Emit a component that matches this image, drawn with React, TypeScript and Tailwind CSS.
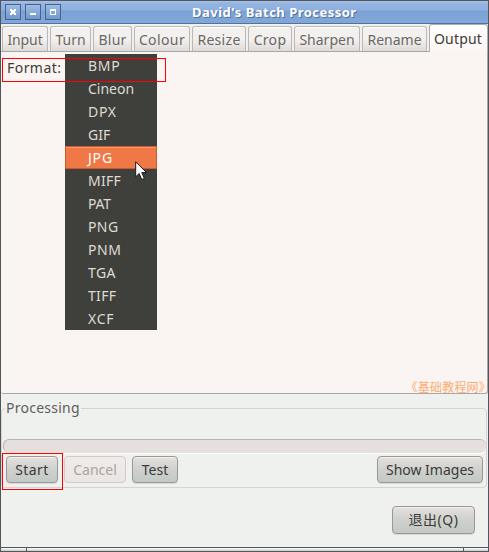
import React from "react";

const tabs = [
  { label: "Input", box: "w-[46px]", text: "tracking-[-0.1px]" },
  { label: "Turn", box: "w-[41px]", text: "tracking-[0px]" },
  { label: "Blur", box: "w-[39px]", text: "tracking-[0.2px]" },
  { label: "Colour", box: "w-[56px]", text: "tracking-[0.4px]" },
  { label: "Resize", box: "w-[54px]", text: "tracking-[0.3px]" },
  { label: "Crop", box: "w-[44px]", text: "tracking-[0.3px]" },
  { label: "Sharpen", box: "w-[66px]", text: "tracking-[0px]" },
  { label: "Rename", box: "w-[65px]", text: "tracking-[0px]" },
];

const formats = [
  { label: "BMP", text: "tracking-[0.7px]" },
  { label: "Cineon", text: "tracking-[0px]" },
  { label: "DPX", text: "tracking-[0.7px]" },
  { label: "GIF", text: "tracking-[0px]" },
  { label: "JPG", text: "tracking-[0.8px]" },
  { label: "MIFF", text: "tracking-[0.3px]" },
  { label: "PAT", text: "tracking-[-0.2px]" },
  { label: "PNG", text: "tracking-[0.4px]" },
  { label: "PNM", text: "tracking-[0.6px]" },
  { label: "TGA", text: "tracking-[0.4px]" },
  { label: "TIFF", text: "tracking-[0.3px]" },
  { label: "XCF", text: "tracking-[0.8px]" },
];

function WindowButton({ children }: { children: React.ReactNode }) {
  return (
    <button className="flex h-4 w-4 items-center justify-center border border-[#46628c] bg-linear-to-b from-[#9dbbe6] to-[#7299cb]">
      <svg width="14" height="14" viewBox="0 0 14 14" shapeRendering="crispEdges">
        {children}
      </svg>
    </button>
  );
}

function Button({ label, className, disabled }: { label: string; className: string; disabled?: boolean }) {
  const look = disabled
    ? "border-[#d3c9c8] bg-linear-to-b from-[#f0ecea] to-[#ebe5e3] text-[#aaa4a2]"
    : "border-[#9b9795] bg-linear-to-b from-[#e4e0dd] via-[#cfd1ce] to-[#c3c9c6] text-[#3c3b37] shadow-[inset_0_1px_0_#f3f0ee,0_1px_0_#d9d9d7]";
  return (
    <button disabled={disabled} className={`flex shrink-0 items-center justify-center rounded-[4px] border whitespace-nowrap ${look} ${className}`}>
      {label}
    </button>
  );
}

export default function App() {
  return (
    <div className="relative flex h-[552px] w-[489px] flex-col overflow-hidden border border-[#54555a] bg-[#eff1ee] font-['Noto_Sans','Noto_Sans_CJK_SC',sans-serif] text-[14px] leading-[18px] text-[#3c3b37]">
      <header className="flex h-[23px] shrink-0 items-center border-b border-[#5272a4] bg-[linear-gradient(#a9c4ea_0,#94b4e1_2px,#8fb0df_9px,#7ba2d5_10px,#82a8d9_100%)] pl-1">
        <div className="flex gap-1">
          <WindowButton>
            <path fill="#fff" d="M4 4h2v1h2V4h2v2H9v2h1v2H8V9H6v1H4V8h1V6H4z" />
          </WindowButton>
          <WindowButton>
            <path fill="#fff" d="M4 8h6v2H4z" />
          </WindowButton>
          <WindowButton>
            <path fill="#fff" fillRule="evenodd" d="M4 4h6v6H4zM5 6v3h4V6z" />
          </WindowButton>
        </div>
        <h1 className="ml-[131px] text-[13px] font-bold tracking-[0.48px] whitespace-nowrap text-white [text-shadow:1px_1px_0_#53719d]">
          David's Batch Processor
        </h1>
      </header>

      <nav className="flex h-[28px] shrink-0 items-end bg-[#eff1ee]">
        <div className="flex h-[26px] flex-1 gap-[2px] border-b border-[#aaa6a4] pl-px">
          {tabs.map((t) => (
            <button
              key={t.label}
              className={`flex h-[25px] shrink-0 items-center justify-center rounded-t-[3px] border border-b-0 border-[#bdb8b6] bg-linear-to-b from-[#f3f1ef] from-50% to-[#dedad7] pt-[2px] text-[#6b6865] shadow-[inset_0_1px_0_#fff] ${t.box} ${t.text}`}
            >
              {t.label}
            </button>
          ))}
        </div>
        <button className="flex h-[28px] w-[59px] shrink-0 items-center justify-center rounded-t-[3px] border border-b-0 border-[#b0acaa] bg-linear-to-b from-white to-[#faf5f2] pr-px tracking-[0.2px]">
          Output
        </button>
      </nav>

      <main className="relative flex h-[342px] shrink-0 rounded-b-[3px] border-r border-b border-[#aaa6a4] bg-[#faf5f2] pl-[6px]">
        <label className="mt-[7px] w-[58px] tracking-[0.45px] whitespace-nowrap">Format:</label>
        <ul className="mt-[2px] h-[276px] w-[92px] bg-[#3f403c] text-[#dfdbd2]">
          {formats.map((f) => (
            <li
              key={f.label}
              className={`flex h-[23px] items-center border pl-[22px] ${f.text} ${
                f.label === "JPG" ? "border-[#c95a2c] bg-[#f07746] text-white shadow-[inset_0_1px_0_#f79a72]" : "border-transparent"
              }`}
            >
              {f.label}
            </li>
          ))}
        </ul>
        <span className="absolute right-[2px] bottom-[-2px] font-['Noto_Sans_CJK_SC',sans-serif] text-[12px] leading-[16px] tracking-[0.2px] whitespace-nowrap text-[#ffab70] [font-feature-settings:'halt']">
          《基础教程网》
        </span>
      </main>

      <fieldset className="relative mt-[14px] flex h-[80px] w-[486px] shrink-0 flex-col rounded-[4px] border border-[#d6d3d1]">
        <span className="absolute -top-[11px] left-[3px] bg-[#eff1ee] pr-px pl-px leading-[20px] tracking-[0.25px] text-[#5f5d5a]">Processing</span>
        <div className="mt-[30px] ml-px h-[14px] w-[483px] rounded-[6px] border-t border-l border-[#b9b3b1] bg-[#e5dfde] shadow-[0_1px_0_#fff]" />
        <div className="mt-[3px] flex pl-1">
          <Button label="Start" className="h-[27px] w-[52px] tracking-[0.4px]" />
          <Button label="Cancel" disabled className="ml-[6px] h-[27px] w-[62px]" />
          <Button label="Test" className="ml-[6px] h-[27px] w-[46px]" />
          <Button label="Show Images" className="ml-auto mr-[3px] h-[27px] w-[106px]" />
        </div>
      </fieldset>

      <div className="mt-[18px] flex justify-end pr-[13px]">
        <Button label="退出(Q)" className="h-[28px] w-[83px] tracking-[0.5px]" />
      </div>

      <footer className="mt-auto flex h-[4px] shrink-0 border-t border-[#54555a] bg-linear-to-b from-white to-[#c3cccb]">
        <div className="w-[26px] border-r border-[#54555a]" />
        <div className="flex-1" />
        <div className="w-[25px] border-l border-[#54555a]" />
      </footer>

      <div className="absolute top-[57px] left-px h-[24px] w-[164px] border border-[#ff0000]" />
      <div className="absolute top-[452px] left-px h-[37px] w-[61px] border border-[#ff0000]" />
      <svg className="absolute top-[160px] left-[134px]" width="13" height="20" viewBox="0 0 13 20">
        <path d="M.7.8v15l3.5-3.3 2.5 6 2.7-1.1-2.6-5.8h4.8z" fill="#fff" stroke="#181818" strokeWidth="1" />
      </svg>
    </div>
  );
}
